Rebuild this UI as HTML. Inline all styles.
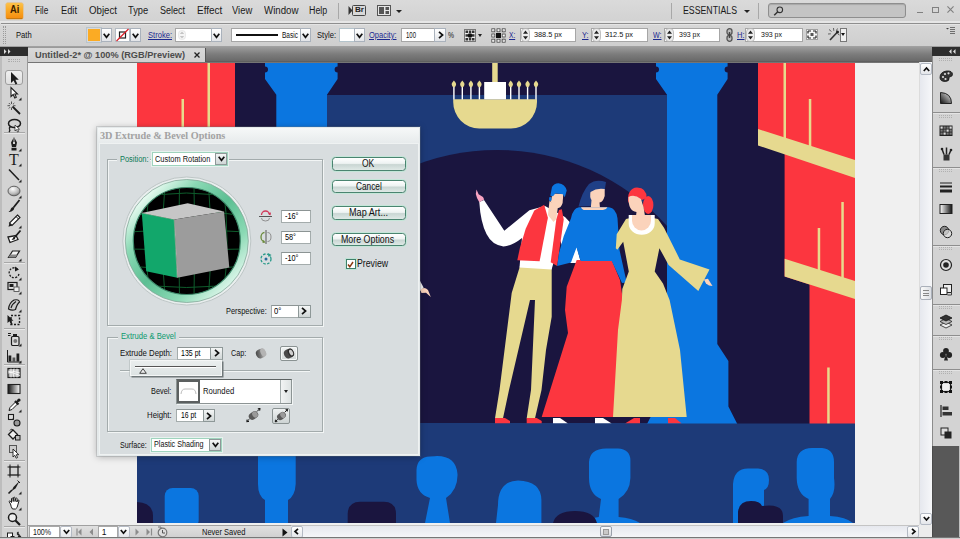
<!DOCTYPE html>
<html><head><meta charset="utf-8"><title>Illustrator</title>
<style>
*{box-sizing:border-box;margin:0;padding:0}
html,body{width:960px;height:539px;overflow:hidden;background:#f0f0f0;font-family:"Liberation Sans",sans-serif;font-size:11px;color:#111}
.a{position:absolute}
svg{display:block;overflow:visible}
</style></head><body>
<div class="a" style="left:28px;top:62px;width:892px;height:463px;background:#f0f0f0;overflow:hidden">
<svg class="a" style="left:109px;top:1px;overflow:hidden" width="718" height="460" viewBox="137 63 718 460">
<rect x="137" y="63" width="718" height="460" fill="#1a153f"/>
<!-- back wall with arch -->
<rect x="327" y="95" width="340" height="329" fill="#1d3a78"/>
<path d="M327 423 L327 226 A228 228 0 0 1 667 226 L667 423 Z" fill="#1a153f"/>
<!-- left curtain -->
<rect x="137" y="63" width="98" height="361" fill="#fc363f"/>
<rect x="181.500" y="99" width="2.500" height="325" fill="#e8d98c"/>
<rect x="207.500" y="63" width="2.500" height="361" fill="#e8d98c"/>
<!-- left column -->
<path d="M265 63 L337.600 63 L337.600 66.500 A3 3 0 0 0 337.600 72.500 L337.600 79 L327 94.700 L327 424 L276.300 424 L276.300 94.700 L265 79 L265 72.500 A3 3 0 0 0 265 66.500 Z" fill="#0b76e0"/>
<!-- right column -->
<path d="M656 63 L727.600 63 L727.600 66.500 A3 3 0 0 0 727.600 72.500 L727.600 79 L717.300 94.700 L717.300 344 L728.400 361 L728.400 406.500 L737.300 424 L647 424 L656 406.500 L656 361 L667 344 L667 94.700 L656 79 L656 72.500 A3 3 0 0 0 656 66.500 Z" fill="#0b76e0"/>
<!-- chandelier -->
<rect x="492.200" y="63" width="5.500" height="20" fill="#e6d98f"/>
<path d="M453.200 99.200 L537 99.200 L537 102 A26 26.400 0 0 1 511 128.400 L479.200 128.400 A26 26.400 0 0 1 453.200 102 Z" fill="#e6d98f"/>
<rect x="484.200" y="82" width="21.800" height="17.300" fill="#fff"/>
<g fill="#fff"><rect x="453.2" y="86" width="1.400" height="13.500"/><rect x="461.6" y="86" width="1.400" height="13.500"/><rect x="470.2" y="86" width="1.400" height="13.500"/><rect x="478.7" y="86" width="1.400" height="13.500"/><rect x="510.0" y="86" width="1.400" height="13.500"/><rect x="518.3" y="86" width="1.400" height="13.500"/><rect x="526.9" y="86" width="1.400" height="13.500"/><rect x="535.3" y="86" width="1.400" height="13.500"/></g>
<g fill="#e6d98f"><path d="M453.9 80.500 Q458.3 85 453.9 87.500 Q449.5 85 453.9 80.500 Z"/><path d="M462.3 80.500 Q466.7 85 462.3 87.500 Q457.9 85 462.3 80.500 Z"/><path d="M470.9 80.500 Q475.3 85 470.9 87.500 Q466.5 85 470.9 80.500 Z"/><path d="M479.4 80.500 Q483.8 85 479.4 87.500 Q475.0 85 479.4 80.500 Z"/><path d="M510.7 80.500 Q515.1 85 510.7 87.500 Q506.3 85 510.7 80.500 Z"/><path d="M519.0 80.500 Q523.4 85 519.0 87.500 Q514.6 85 519.0 80.500 Z"/><path d="M527.6 80.500 Q532.0 85 527.6 87.500 Q523.2 85 527.6 80.500 Z"/><path d="M536.0 80.500 Q540.4 85 536.0 87.500 Q531.6 85 536.0 80.500 Z"/></g>
<!-- right curtain -->
<path d="M758 63 L855 63 L855 424 L809.500 424 L809.500 284.500 L784.600 276.500 L784.600 153 L758 145 Z" fill="#fc363f"/>
<rect x="783.500" y="63" width="2.500" height="76" fill="#e8d98c"/>
<rect x="808.800" y="99" width="2.500" height="48" fill="#e8d98c"/>
<rect x="817.700" y="228" width="2.500" height="44" fill="#e8d98c"/>
<rect x="841.300" y="202" width="2.500" height="76" fill="#e8d98c"/>
<rect x="827.200" y="367.500" width="2.500" height="57" fill="#e8d98c"/>
<path d="M758 129 L855 160 L855 178 L758 145.500 Z" fill="#e6d98f"/>
<path d="M784.600 258.800 L855 281 L855 299 L784.600 276.500 Z" fill="#e6d98f"/>
<!-- man -->
<g>
<path d="M520 266 L551.700 268 L551.700 316.700 L546 350 L541.500 390 L535 418.300 L526.700 418.300 L531 390 L535 300 L530 300 L509 390 L503 418.300 L495 418.300 L499.500 390 L511.700 293 Z" fill="#e6d98f"/>
<path d="M495 418 L505 418 L510 421 L510 423.500 L495 423.500 Z" fill="#fc363f"/>
<path d="M526.700 418 L536.700 418 L541.700 421 L541.700 423.500 L526.700 423.500 Z" fill="#fc363f"/>
<!-- arm -->
<path d="M479.300 201.900 L484 200 L504.300 230.700 L529.400 210.300 L545 206 L565 217 L571.500 224 L573 262 L568 262 L560 240 L551.600 269.500 L519.500 267.500 L522 238 Q512 246 503.400 246.400 Q492 245 486.500 234 Q480.500 222 479.300 201.900 Z" fill="#fff"/>
<path d="M475.800 194 L476.500 189.600 L478.600 194.300 L483 197 L484.200 199.600 L479.300 202.200 Q476.500 198 475.800 194 Z" fill="#f7a3c2"/>
<path d="M549.500 201 L558 206 L556.300 219 L553.500 222 L547.900 215 Z" fill="#fbd3bb"/>
<path d="M544.200 204.700 L547.900 217.700 L539.600 261.300 L517.300 260.300 L520 247.400 L525.700 228.800 L534.300 210.500 Z" fill="#fc363f"/>
<path d="M561.800 209.300 L563.700 219.500 L557.200 265.900 L550.700 262.200 L556.300 219.500 L559 210 Z" fill="#fc363f"/>
<path d="M552.500 193.500 L563.300 194 L562.600 203 Q561 208.200 557.500 208.200 Q553 207 550.800 201.500 Z" fill="#fbd3bb"/>
<path d="M550.300 195.800 L552 187 Q554 183.200 558.500 183.200 Q565.200 184 566.700 190.500 L564.800 197.200 L562.800 194.200 L555.500 193.200 L553 196.300 Z" fill="#0b76e0"/>
<ellipse cx="550.300" cy="199" rx="1.300" ry="2.300" fill="#0b76e0"/>
<path d="M576.500 246 L570 263 L581 263 Z" fill="#fff"/>
</g>
<!-- blue woman -->
<g>
<path d="M578.500 206.500 Q582 192 589 184 Q596 178.500 606 182 L604.700 190.400 L592 192 L592 206 Z" fill="#1f3f86"/>
<path d="M590.500 192 Q597 187.500 604.700 189 L604.700 196 Q603 202 599.500 202.500 L600 208 L590.800 208 L591.500 200 Q589.500 197 590.500 192 Z" fill="#fbd3bb"/>
<path d="M576.700 260 L611.700 260 L620 280 L640 417 L541.700 417 L568 333 L565 310 L566.700 286.700 Z" fill="#fc363f"/>
<path d="M579 207.200 L609 207.200 Q616 208 617.500 218.200 L619.500 250 L626.700 282.500 L622 283 L611.700 261 L580.600 261 L576.500 247.500 L571 262.500 L557.200 266 L559 253 L563.700 236.200 L571 218.200 Q573 208 579 207.200 Z" fill="#0b76e0"/>
<path d="M581 207.200 L607.500 207.200 Q606 210 603 210 L585 210 Q582 210 581 207.200 Z" fill="#fbd3bb"/>
</g>
<!-- yellow woman -->
<g>
<path d="M626 219 Q641 214 658 219 L664 227.800 L679.800 259.400 L709.500 269.600 L698.300 290.900 L668.600 264.900 L659.400 248.200 L654.700 271.400 L663 283.500 L669.600 300 L680 350 L686.700 417 L613 417 L618 330 L621.900 300 L622.300 289 L628.800 271.400 L623.200 241.700 L617.300 249.800 L615.800 248.200 L616.700 234.300 Z" fill="#e6d98f"/>
<path d="M703.900 279.500 L708 278.800 L712.500 286 L709 285.500 L706 283.500 Z" fill="#fbd3bb"/>
<path d="M628.700 215 L654.700 215 L654.700 223.500 A13 11.200 0 0 1 628.700 223.500 Z" fill="#fff"/>
<path d="M632 215 L651 215 L651 220.500 A9.500 10 0 0 1 632 220.500 Z" fill="#fbd3bb"/>
<ellipse cx="648.200" cy="205" rx="5.200" ry="9" fill="#fc363f"/>
<path d="M628 203 Q627 188 637 187.500 Q647 188 646.500 198 L642 200 Q636 195 631 197 Z" fill="#fc363f"/>
<path d="M628.500 197 Q634 193.500 641 199 L643.500 207 L645 216 L636 216 L636.500 212 Q628 211 628.500 197 Z" fill="#fbd3bb"/>
</g>
<!-- shoes -->
<path d="M553 418 L560 418 L568 423.500 L553 423.500 Z" fill="#fff"/>
<path d="M595 418 L603 418 L611.700 423.500 L595 423.500 Z" fill="#fff"/>
<path d="M625 423.500 L634 418 L640 418 L640 423.500 Z" fill="#fc363f"/>
<path d="M668 418 L675 418 L681.700 423.500 L668 423.500 Z" fill="#fc363f"/>
<!--FIG-->
<path d="M418 280 L420.300 281.500 L423.600 287.500 L421 290.500 L418 290.500 Z" fill="#f2f2f4"/>
<path d="M420.300 290 Q424 286 428 290 L430.800 297 L426 292.800 L421.500 293 Z" fill="#fbd3bb"/>
<!-- stage floor -->
<rect x="137" y="423.500" width="718" height="100" fill="#1d3a78"/>
<g fill="#0b76e0">
<rect x="164.700" y="488" width="34" height="40" rx="8"/>
<path d="M258 440 L295.700 440 L295.700 484 Q295 496 288 500 L288 523 L265 523 L265 500 Q258 496 258 484 Z"/>
<path d="M425 523 L430 498 Q417 494 416.500 480 L416.500 470 Q417 457 430 456.500 Q436 456 437 456 Q456 456 457.500 474 Q458 490 446 498 L450 523 Z"/>
<path d="M496 523 L498 505 Q498 481 518 480.500 Q541 481 541.400 500 L541.400 523 Z"/>
<path d="M585 523 Q590 518 598.800 517 L601 499 Q589 494 589 478 L589 462 Q590 448.500 606 448.400 L618 448.400 Q630 449 630.400 460 L630.400 478 Q630 492 618.600 499 L618.600 517 Q632 518 640 523 Z"/>
<path d="M733 523 L733 484 Q734 469 748 468.600 L758 468.600 Q769 469 769 480 Q769 488 764 490 L764 523 Z"/>
<path d="M783 523 Q792 517 808.600 516 L808.600 499 Q797 494 796.700 478 L796.700 462 Q797 448.500 812 448 L822 448 Q834 449 834 462 L834 478 Q836 492 830 499 L830 516 Q846 517 853 523 Z"/>
</g>
<g fill="#1a153f">
<path d="M137 502 Q153 503 153 516 L153 523 L137 523 Z"/>
<path d="M347.700 523 L347.700 514 Q348 502 360 501.700 L384 501.700 Q396 502 396 514 L396 523 Z"/>
<path d="M553 523 Q556 511 575 511 Q594 511 597 523 Z"/>
<path d="M738 523 L738 512 Q739 501 751 501 Q760 501 762 506 Q783 503 783 516 L783 523 Z"/>
</g>


</svg>
</div>
<div class="a" style="left:0px;top:0px;width:960px;height:22px;background:linear-gradient(#dadada,#d2d2d2);"></div>
<div class="a" style="left:0px;top:22px;width:960px;height:25px;background:linear-gradient(#d8d8d8,#cecece);"></div>
<div class="a" style="left:0px;top:21px;width:960px;height:1.5px;background:#e6e6e6;"></div>
<div class="a" style="left:1px;top:22.5px;width:959px;height:1px;background:#8e8e8e;"></div>
<div class="a" style="left:1px;top:23.5px;width:959px;height:1px;background:#e4e4e4;"></div>
<div class="a" style="left:6px;top:2.5px;width:17px;height:16px;background:linear-gradient(#fcc24a,#f9a825 50%,#f68e10);border-bottom:1px solid #c87a10;border-radius:1.500px;box-shadow:0 0 0 0.500px #e8b46a"></div>
<span class="a" style="left:9.7px;top:3.7px;font-size:11px;line-height:11px;color:#3a1c00;white-space:nowrap;transform-origin:0 0;transform:scaleX(0.845);font-weight:bold;">Ai</span>
<span class="a" style="left:35.0px;top:5.8px;font-size:10px;line-height:10px;color:#1a1a1a;white-space:nowrap;transform-origin:0 0;transform:scaleX(0.825);">File</span>
<span class="a" style="left:61.0px;top:5.8px;font-size:10px;line-height:10px;color:#1a1a1a;white-space:nowrap;transform-origin:0 0;transform:scaleX(0.929);">Edit</span>
<span class="a" style="left:89.0px;top:5.8px;font-size:10px;line-height:10px;color:#1a1a1a;white-space:nowrap;transform-origin:0 0;transform:scaleX(0.969);">Object</span>
<span class="a" style="left:128.3px;top:5.8px;font-size:10px;line-height:10px;color:#1a1a1a;white-space:nowrap;transform-origin:0 0;transform:scaleX(0.932);">Type</span>
<span class="a" style="left:160.0px;top:5.8px;font-size:10px;line-height:10px;color:#1a1a1a;white-space:nowrap;transform-origin:0 0;transform:scaleX(0.900);">Select</span>
<span class="a" style="left:196.7px;top:5.8px;font-size:10px;line-height:10px;color:#1a1a1a;white-space:nowrap;transform-origin:0 0;transform:scaleX(0.997);">Effect</span>
<span class="a" style="left:232.3px;top:5.8px;font-size:10px;line-height:10px;color:#1a1a1a;white-space:nowrap;transform-origin:0 0;transform:scaleX(0.940);">View</span>
<span class="a" style="left:263.5px;top:5.8px;font-size:10px;line-height:10px;color:#1a1a1a;white-space:nowrap;transform-origin:0 0;transform:scaleX(0.970);">Window</span>
<span class="a" style="left:308.8px;top:5.8px;font-size:10px;line-height:10px;color:#1a1a1a;white-space:nowrap;transform-origin:0 0;transform:scaleX(0.885);">Help</span>
<div class="a" style="left:338px;top:3px;width:1px;height:16px;background:#a8a8a8;"></div>
<svg class="a" style="left:348px;top:5px" width="18" height="11" viewBox="0 0 18 11"><path d="M0.500 1 L4.500 5.500 L0.500 10 Z" fill="#333"/><rect x="4.500" y="0.500" width="13" height="10" rx="1" fill="#d8d8d8" stroke="#444"/></svg>
<span class="a" style="left:355.0px;top:6.4px;font-size:7.5px;line-height:7.5px;color:#222;white-space:nowrap;transform-origin:0 0;transform:scaleX(1.080);font-weight:bold;">Br</span>
<svg class="a" style="left:377px;top:5px" width="14" height="11" viewBox="0 0 14 11"><rect x="0.500" y="0.500" width="13" height="10" fill="#e6e6e6" stroke="#555"/><rect x="2" y="2" width="5" height="7" fill="#555"/><rect x="8.500" y="2" width="3.500" height="3" fill="#555"/><rect x="8.500" y="6" width="3.500" height="3" fill="#555"/></svg>
<div class="a" style="left:395.5px;top:9.5px;width:0;height:0;border-top:3.5px solid #222;border-left:3.0px solid transparent;border-right:3.0px solid transparent"></div>
<div class="a" style="left:671px;top:3px;width:1px;height:16px;background:#a8a8a8;"></div>
<span class="a" style="left:683.0px;top:5.9px;font-size:10px;line-height:10px;color:#1a1a1a;white-space:nowrap;transform-origin:0 0;transform:scaleX(0.875);">ESSENTIALS</span>
<div class="a" style="left:744px;top:9.5px;width:0;height:0;border-top:3.5px solid #222;border-left:3.0px solid transparent;border-right:3.0px solid transparent"></div>
<div class="a" style="left:758px;top:3px;width:1px;height:16px;background:#a8a8a8;"></div>
<div class="a" style="left:768px;top:3px;width:138px;height:15px;background:#c4c4c4;border:1px solid #8e8e8e;border-radius:3px;box-shadow:inset 0 1px 1px #a8a8a8"><svg class="a" style="left:4px;top:2px" width="12" height="10" viewBox="0 0 12 10"><circle cx="6.800" cy="3.800" r="2.800" fill="none" stroke="#333" stroke-width="1.100"/><path d="M4.800 5.800 L1.200 9.300" stroke="#333" stroke-width="1.500"/></svg></div>
<div class="a" style="left:916.5px;top:11.5px;width:6px;height:1.5px;background:#808080;"></div>
<div class="a" style="left:931.5px;top:6.5px;width:7.5px;height:6px;background:transparent;border:1px solid #808080;border-top-width:1.500px"></div>
<svg class="a" style="left:946.500px;top:6px" width="7" height="7" viewBox="0 0 8 8"><path d="M0.500 0.500 L7.500 7.500 M7.500 0.500 L0.500 7.500" stroke="#808080" stroke-width="1.300"/></svg>
<div class="a" style="left:3px;top:26px;width:3px;height:18px;background:transparent;border-left:1px dotted #9a9a9a;border-right:1px dotted #9a9a9a"></div>
<span class="a" style="left:16.0px;top:30.7px;font-size:8.5px;line-height:8.5px;color:#111;white-space:nowrap;transform-origin:0 0;transform:scaleX(0.898);">Path</span>
<div class="a" style="left:87px;top:28px;width:14px;height:14px;background:#fbab24;border:1px solid #d8d8d8;box-shadow:0 0 0 1px #b8c4cc"></div>
<div class="a" style="left:101px;top:28px;width:11px;height:14px;background:linear-gradient(#ffffff,#e2e4e8);border:1px solid #aab2bc;"><svg class="a" style="left:1px;top:3.500px" width="7" height="6" viewBox="0 0 7 6"><path d="M0.700 0.800 L3.500 4.300 L6.300 0.800" fill="none" stroke="#111" stroke-width="1.700"/></svg></div>
<div class="a" style="left:115px;top:28px;width:15px;height:14px;background:#fff;border:1px solid #b4bcc4"><svg class="a" style="left:0;top:0" width="13" height="12" viewBox="0 0 13 12"><rect x="3.500" y="3" width="6" height="6" fill="none" stroke="#222" stroke-width="1.200"/><path d="M12.500 0 L0.500 12" stroke="#d8202a" stroke-width="1.300"/></svg></div>
<div class="a" style="left:130px;top:28px;width:11px;height:14px;background:linear-gradient(#ffffff,#e2e4e8);border:1px solid #aab2bc;"><svg class="a" style="left:1px;top:3.500px" width="7" height="6" viewBox="0 0 7 6"><path d="M0.700 0.800 L3.500 4.300 L6.300 0.800" fill="none" stroke="#111" stroke-width="1.700"/></svg></div>
<span class="a" style="left:147.7px;top:30.7px;font-size:8.5px;line-height:8.5px;color:#1c2a90;white-space:nowrap;transform-origin:0 0;transform:scaleX(0.891);text-decoration:underline;">Stroke:</span>
<div class="a" style="left:175px;top:28px;width:37px;height:14px;background:#fff;border:1px solid #a6a6a6;"><svg class="a" style="left:2px;top:1px" width="8" height="10" viewBox="0 0 8 10"><rect x="0.500" y="0.500" width="7" height="9" rx="3" fill="#f4f4f4" stroke="#ddd" stroke-width="0.600"/><path d="M1.800 4 L4 1.500 L6.200 4 Z M1.800 6 L4 8.500 L6.200 6 Z" fill="#c4c4c4"/></svg></div>
<div class="a" style="left:211px;top:28px;width:11px;height:14px;background:linear-gradient(#ffffff,#e2e4e8);border:1px solid #aab2bc;"><svg class="a" style="left:1px;top:3.500px" width="7" height="6" viewBox="0 0 7 6"><path d="M0.700 0.800 L3.500 4.300 L6.300 0.800" fill="none" stroke="#111" stroke-width="1.700"/></svg></div>
<div class="a" style="left:231px;top:28px;width:70px;height:14px;background:#fff;border:1px solid #a6a6a6;"><div class="a" style="left:4px;top:5px;width:42px;height:2px;background:#111"></div></div>
<span class="a" style="left:282.0px;top:30.7px;font-size:8.5px;line-height:8.5px;color:#111;white-space:nowrap;transform-origin:0 0;transform:scaleX(0.770);">Basic</span>
<div class="a" style="left:300px;top:28px;width:11px;height:14px;background:linear-gradient(#ffffff,#e2e4e8);border:1px solid #aab2bc;"><svg class="a" style="left:1px;top:3.500px" width="7" height="6" viewBox="0 0 7 6"><path d="M0.700 0.800 L3.500 4.300 L6.300 0.800" fill="none" stroke="#111" stroke-width="1.700"/></svg></div>
<span class="a" style="left:316.8px;top:30.7px;font-size:8.5px;line-height:8.5px;color:#111;white-space:nowrap;transform-origin:0 0;transform:scaleX(0.894);">Style:</span>
<div class="a" style="left:339px;top:28px;width:16px;height:14px;background:#fff;border:1px solid #b4c4cc;"></div>
<div class="a" style="left:354px;top:28px;width:11px;height:14px;background:linear-gradient(#ffffff,#e2e4e8);border:1px solid #aab2bc;"><svg class="a" style="left:1px;top:3.500px" width="7" height="6" viewBox="0 0 7 6"><path d="M0.700 0.800 L3.500 4.300 L6.300 0.800" fill="none" stroke="#111" stroke-width="1.700"/></svg></div>
<span class="a" style="left:368.8px;top:30.7px;font-size:8.5px;line-height:8.5px;color:#1c2a90;white-space:nowrap;transform-origin:0 0;transform:scaleX(0.882);text-decoration:underline;">Opacity:</span>
<div class="a" style="left:401px;top:28px;width:34px;height:14px;background:#fff;border:1px solid #a6a6a6;"></div>
<span class="a" style="left:405.5px;top:30.7px;font-size:8.5px;line-height:8.5px;color:#111;white-space:nowrap;transform-origin:0 0;transform:scaleX(0.705);">100</span>
<div class="a" style="left:434px;top:28px;width:12px;height:14px;background:linear-gradient(#ffffff,#e2e4e8);border:1px solid #aab2bc"><svg class="a" style="left:2.500px;top:2px" width="6" height="8" viewBox="0 0 6 8"><path d="M1 0.800 L4.600 4 L1 7.200" fill="none" stroke="#111" stroke-width="1.700"/></svg></div>
<span class="a" style="left:447.5px;top:30.7px;font-size:8.5px;line-height:8.5px;color:#111;white-space:nowrap;transform-origin:0 0;transform:scaleX(0.794);">%</span>
<svg class="a" style="left:464px;top:29px" width="12" height="13" viewBox="0 0 12 13"><rect x="0.500" y="0.500" width="11" height="12" fill="#eee" stroke="#777"/><g fill="#333"><rect x="1.500" y="1.500" width="2.500" height="2.500"/><rect x="4.800" y="1.500" width="2.500" height="2.500"/><rect x="8" y="1.500" width="2.500" height="2.500"/><rect x="1.500" y="5.200" width="2.500" height="2.500"/><rect x="8" y="5.200" width="2.500" height="2.500"/><rect x="1.500" y="9" width="2.500" height="2.500"/><rect x="4.800" y="9" width="2.500" height="2.500"/><rect x="8" y="9" width="2.500" height="2.500"/></g><circle cx="6" cy="6.500" r="2.300" fill="#111"/></svg>
<div class="a" style="left:477.5px;top:34px;width:0;height:0;border-top:3px solid #222;border-left:2.0px solid transparent;border-right:2.0px solid transparent"></div>
<svg class="a" style="left:491px;top:28px" width="15" height="15" viewBox="0 0 15 15"><g fill="#fff" stroke="#444" stroke-width="0.800"><rect x="0.800" y="0.800" width="3" height="3"/><rect x="6" y="0.800" width="3" height="3"/><rect x="11.200" y="0.800" width="3" height="3"/><rect x="0.800" y="6" width="3" height="3"/><rect x="11.200" y="6" width="3" height="3"/><rect x="0.800" y="11.200" width="3" height="3"/><rect x="6" y="11.200" width="3" height="3"/><rect x="11.200" y="11.200" width="3" height="3"/></g><rect x="5" y="5" width="5" height="5" fill="#111"/><path d="M2.300 2.300 H12.700 V12.700 H2.300 Z" fill="none" stroke="#888" stroke-width="0.500" stroke-dasharray="1 1"/></svg>
<span class="a" style="left:508.8px;top:30.7px;font-size:8.5px;line-height:8.5px;color:#1c2a90;white-space:nowrap;transform-origin:0 0;transform:scaleX(0.772);text-decoration:underline;">X:</span>
<div class="a" style="left:520px;top:28px;width:56px;height:14px;background:#fff;border:1px solid #a6a6a6;"></div>
<svg class="a" style="left:520.5px;top:28px" width="9" height="14" viewBox="0 0 9 14"><rect x="0.500" y="0.500" width="8" height="13" rx="3.500" fill="#ececec" stroke="#aaa" stroke-width="0.700"/><path d="M2 5.800 L4.500 2.600 L7 5.800 Z M2 8.200 L4.500 11.400 L7 8.200 Z" fill="#222"/></svg>
<span class="a" style="left:534.0px;top:31.0px;font-size:8px;line-height:8px;color:#111;white-space:nowrap;transform-origin:0 0;transform:scaleX(0.912);">388.5 px</span>
<span class="a" style="left:581.5px;top:30.7px;font-size:8.5px;line-height:8.5px;color:#1c2a90;white-space:nowrap;transform-origin:0 0;transform:scaleX(0.860);text-decoration:underline;">Y:</span>
<div class="a" style="left:591px;top:28px;width:57px;height:14px;background:#fff;border:1px solid #a6a6a6;"></div>
<svg class="a" style="left:591.5px;top:28px" width="9" height="14" viewBox="0 0 9 14"><rect x="0.500" y="0.500" width="8" height="13" rx="3.500" fill="#ececec" stroke="#aaa" stroke-width="0.700"/><path d="M2 5.800 L4.500 2.600 L7 5.800 Z M2 8.200 L4.500 11.400 L7 8.200 Z" fill="#222"/></svg>
<span class="a" style="left:605.0px;top:31.0px;font-size:8px;line-height:8px;color:#111;white-space:nowrap;transform-origin:0 0;transform:scaleX(0.912);">312.5 px</span>
<span class="a" style="left:652.5px;top:30.7px;font-size:8.5px;line-height:8.5px;color:#1c2a90;white-space:nowrap;transform-origin:0 0;transform:scaleX(0.831);text-decoration:underline;">W:</span>
<div class="a" style="left:664px;top:28px;width:56px;height:14px;background:#fff;border:1px solid #a6a6a6;"></div>
<svg class="a" style="left:664.5px;top:28px" width="9" height="14" viewBox="0 0 9 14"><rect x="0.500" y="0.500" width="8" height="13" rx="3.500" fill="#ececec" stroke="#aaa" stroke-width="0.700"/><path d="M2 5.800 L4.500 2.600 L7 5.800 Z M2 8.200 L4.500 11.400 L7 8.200 Z" fill="#222"/></svg>
<span class="a" style="left:679.0px;top:31.0px;font-size:8px;line-height:8px;color:#111;white-space:nowrap;transform-origin:0 0;transform:scaleX(0.874);">393 px</span>
<svg class="a" style="left:726px;top:28px" width="7" height="14" viewBox="0 0 7 14"><rect x="1" y="0.700" width="5" height="6" rx="2.500" fill="#bbb" stroke="#555" stroke-width="1.300"/><rect x="1" y="7.300" width="5" height="6" rx="2.500" fill="#bbb" stroke="#555" stroke-width="1.300"/><rect x="2.800" y="4" width="1.400" height="6" fill="#444"/></svg>
<span class="a" style="left:736.5px;top:30.7px;font-size:8.5px;line-height:8.5px;color:#1c2a90;white-space:nowrap;transform-origin:0 0;transform:scaleX(0.882);text-decoration:underline;">H:</span>
<div class="a" style="left:745px;top:28px;width:58px;height:14px;background:#fff;border:1px solid #a6a6a6;"></div>
<svg class="a" style="left:745.5px;top:28px" width="9" height="14" viewBox="0 0 9 14"><rect x="0.500" y="0.500" width="8" height="13" rx="3.500" fill="#ececec" stroke="#aaa" stroke-width="0.700"/><path d="M2 5.800 L4.500 2.600 L7 5.800 Z M2 8.200 L4.500 11.400 L7 8.200 Z" fill="#222"/></svg>
<span class="a" style="left:761.0px;top:31.0px;font-size:8px;line-height:8px;color:#111;white-space:nowrap;transform-origin:0 0;transform:scaleX(0.874);">393 px</span>
<svg class="a" style="left:806px;top:29px" width="12" height="11" viewBox="0 0 12 11"><rect x="0.500" y="0.500" width="11" height="10" fill="#f6f6f6" stroke="#a0a0a0"/><path d="M2 2 L5 2 M2 2 L2 4.500 M10 2 L7 2 M10 2 L10 4.500 M2 9 L5 9 M2 9 L2 6.500 M10 9 L7 9 M10 9 L10 6.500" stroke="#222" stroke-width="1.200"/><rect x="4.500" y="4" width="3" height="3" fill="#555"/></svg>
<svg class="a" style="left:827px;top:27px" width="14" height="15" viewBox="0 0 14 15"><path d="M3 13 L10.500 5" stroke="#333" stroke-width="1.700"/><path d="M2 2.500 L4.500 4.500 M6.500 1 L6.800 3.800 M1 7 L3.800 6.800 M10.500 1.500 L9.300 3.800 M12.500 8 L10.800 7" stroke="#555" stroke-width="0.900"/><circle cx="10.500" cy="5" r="1.500" fill="#222"/></svg>
<div class="a" style="left:840px;top:28px;width:7px;height:14px;background:#f0f0f0;border:1px solid #777"><div class="a" style="left:0.3px;top:4px;width:0;height:0;border-top:3px solid #111;border-left:2.2px solid transparent;border-right:2.2px solid transparent"></div></div>
<svg class="a" style="left:946px;top:27px" width="9" height="7" viewBox="0 0 9 7"><path d="M0 1 L1.500 2.500 L3 1 Z" fill="#444"/><path d="M4 0.500 H9 M4 2.500 H9 M4 4.500 H9 M4 6.500 H9" stroke="#555" stroke-width="0.800"/></svg>
<div class="a" style="left:0px;top:47px;width:960px;height:16px;background:linear-gradient(#9c9c9c,#7c7c7c 45%,#6a6a6a 85%,#5a5a5a 93%,#8a8a8a);"></div>
<div class="a" style="left:0px;top:46px;width:960px;height:1px;background:#a0a0a0;"></div>
<div class="a" style="left:28px;top:47.5px;width:178px;height:14.5px;background:linear-gradient(#d8d8d8,#cfcfcf);border-right:1px solid #555"></div>
<span class="a" style="left:35.0px;top:49.9px;font-size:9.5px;line-height:9.5px;color:#4c4c4c;white-space:nowrap;transform-origin:0 0;transform:scaleX(0.968);font-weight:bold;">Untitled-2* @ 100% (RGB/Preview)</span>
<svg class="a" style="left:194px;top:52px" width="6" height="6" viewBox="0 0 6 6"><path d="M0.500 0.500 L5.500 5.500 M5.500 0.500 L0.500 5.500" stroke="#222" stroke-width="1.300"/></svg>
<div class="a" style="left:0px;top:47px;width:28px;height:9px;background:#2e2e2e;"><svg class="a" style="left:3.500px;top:2px" width="8" height="5" viewBox="0 0 8 5"><path d="M0 0 L2.500 2.500 L0 5 Z M4 0 L6.500 2.500 L4 5 Z" fill="#ddd"/></svg></div>
<div class="a" style="left:932px;top:47px;width:28px;height:8.5px;background:#2e2e2e;"><svg class="a" style="left:17px;top:2px" width="8" height="5" viewBox="0 0 8 5"><path d="M2.500 0 L0 2.500 L2.500 5 Z M6.500 0 L4 2.500 L6.500 5 Z" fill="#ddd"/></svg></div>
<div class="a" style="left:0px;top:56px;width:28px;height:483px;background:#d3d3d3;border-right:1px solid #9a9a9a;border-left:2px solid #bdbdbd"></div>
<div class="a" style="left:8px;top:59px;width:12px;height:3px;background:transparent;border-top:1px dotted #aaa;border-bottom:1px dotted #aaa"></div>
<div class="a" style="left:4px;top:132px;width:21px;height:1px;background:#a8a8a8;box-shadow:0 1px 0 #e8e8e8"></div>
<div class="a" style="left:4px;top:262px;width:21px;height:1px;background:#a8a8a8;box-shadow:0 1px 0 #e8e8e8"></div>
<div class="a" style="left:4px;top:328px;width:21px;height:1px;background:#a8a8a8;box-shadow:0 1px 0 #e8e8e8"></div>
<div class="a" style="left:4px;top:363.5px;width:21px;height:1px;background:#a8a8a8;box-shadow:0 1px 0 #e8e8e8"></div>
<div class="a" style="left:4px;top:460px;width:21px;height:1px;background:#a8a8a8;box-shadow:0 1px 0 #e8e8e8"></div>
<div class="a" style="left:4px;top:526px;width:21px;height:1px;background:#a8a8a8;box-shadow:0 1px 0 #e8e8e8"></div>
<div class="a" style="left:5px;top:70px;width:18px;height:15px;background:linear-gradient(#f0f0f0,#dedede);border:1px solid #9e9e9e;border-radius:3px"></div>
<svg class="a" style="left:5.5px;top:69.5px" width="16" height="16" viewBox="0 0 16 16"><path d="M5 2 L5 13 L7.600 10.500 L9.500 14.500 L11.300 13.700 L9.400 9.800 L12.800 9.800 Z" fill="#1c1c1c"/></svg>
<svg class="a" style="left:5.5px;top:85.0px" width="16" height="16" viewBox="0 0 16 16"><path d="M5 2.500 L5 11.500 L7.200 9.500 L8.800 13 L10.300 12.300 L8.800 9 L11.500 9 Z" fill="#fff" stroke="#1c1c1c" stroke-width="1.100"/><path d="M15.500 12.500 L15.500 15.500 L12.500 15.500 Z" fill="#222"/></svg>
<svg class="a" style="left:5.5px;top:100.0px" width="16" height="16" viewBox="0 0 16 16"><path d="M6.500 6.500 L14 14" stroke="#1c1c1c" stroke-width="1.800"/><path d="M5.500 1.500 V4 M5.500 7.500 V10 M1.500 5.700 H4 M7.200 5.700 H9.500 M2.800 3 L4.200 4.400 M8.300 3 L6.900 4.400 M2.800 8.500 L4.200 7.100" stroke="#444" stroke-width="0.900"/></svg>
<svg class="a" style="left:5.5px;top:116.5px" width="16" height="16" viewBox="0 0 16 16"><ellipse cx="8.500" cy="6.500" rx="6" ry="4" fill="none" stroke="#1c1c1c" stroke-width="1.500"/><path d="M5 9.500 Q3 10 3.500 12 Q4.500 13.500 3 15" fill="none" stroke="#1c1c1c" stroke-width="1.300"/><path d="M9 8 L9 14 L10.500 12.600 L11.500 15 L12.700 14.500 L11.700 12.200 L13.500 12.200 Z" fill="#fff" stroke="#1c1c1c" stroke-width="0.700"/></svg>
<svg class="a" style="left:5.5px;top:135.5px" width="16" height="16" viewBox="0 0 16 16"><path d="M8 1 L11 6.500 L10 11 L6 11 L5 6.500 Z" fill="#1c1c1c"/><circle cx="8" cy="7" r="1.100" fill="#fff"/><path d="M8 1.500 V6" stroke="#fff" stroke-width="0.700"/><rect x="5.500" y="11.800" width="5" height="2.700" fill="#1c1c1c"/><path d="M15.500 12.500 L15.500 15.500 L12.500 15.500 Z" fill="#222"/></svg>
<svg class="a" style="left:5.5px;top:151.0px" width="16" height="16" viewBox="0 0 16 16"><text x="8" y="13.500" text-anchor="middle" font-family="Liberation Serif,serif" font-size="16" fill="#1c1c1c">T</text><path d="M15.500 12.500 L15.500 15.500 L12.500 15.500 Z" fill="#222"/></svg>
<svg class="a" style="left:5.5px;top:167.0px" width="16" height="16" viewBox="0 0 16 16"><path d="M3 2.500 L13 13" stroke="#1c1c1c" stroke-width="1.500"/><path d="M15.500 12.500 L15.500 15.500 L12.500 15.500 Z" fill="#222"/></svg>
<svg class="a" style="left:5.5px;top:183.0px" width="16" height="16" viewBox="0 0 16 16"><defs><radialGradient id="eg" cx="0.400" cy="0.300" r="0.800"><stop offset="0" stop-color="#fff"/><stop offset="0.600" stop-color="#bbb"/><stop offset="1" stop-color="#666"/></radialGradient></defs><ellipse cx="8" cy="8" rx="6" ry="4.800" fill="url(#eg)" stroke="#555" stroke-width="0.900"/><path d="M15.500 12.500 L15.500 15.500 L12.500 15.500 Z" fill="#222"/></svg>
<svg class="a" style="left:5.5px;top:197.5px" width="16" height="16" viewBox="0 0 16 16"><path d="M13.500 2 L7.500 9.500" stroke="#1c1c1c" stroke-width="1.800"/><path d="M7.500 9 Q9 10.500 7.500 12 Q5 14.500 2.500 14 Q4.500 12.500 5 10.500 Q5.800 8.800 7.500 9 Z" fill="#1c1c1c"/></svg>
<svg class="a" style="left:5.5px;top:212.5px" width="16" height="16" viewBox="0 0 16 16"><path d="M11.500 2 L14 4.500 L6 12.500 L3.500 10 Z" fill="#fff" stroke="#1c1c1c" stroke-width="1.100"/><path d="M3.500 10 L6 12.500 L2.500 13.800 Z" fill="#1c1c1c"/><path d="M10 3.500 L12.500 6" stroke="#1c1c1c" stroke-width="1"/><path d="M15.500 12.500 L15.500 15.500 L12.500 15.500 Z" fill="#222"/></svg>
<svg class="a" style="left:5.5px;top:229.0px" width="16" height="16" viewBox="0 0 16 16"><path d="M2 8 L10 6.500 L12 10.500 L4 13.500 Z" fill="#fff" stroke="#1c1c1c" stroke-width="1.300"/><path d="M14.500 1.500 L9 8" stroke="#1c1c1c" stroke-width="1.800"/><path d="M9 7.500 Q10 9 8.500 10.500 L5.500 11 Q7 9.500 7.300 8.200 Z" fill="#1c1c1c"/></svg>
<svg class="a" style="left:5.5px;top:245.5px" width="16" height="16" viewBox="0 0 16 16"><path d="M6.500 5 L13.500 5 L9.500 11.500 L2.500 11.500 Z" fill="#f4f4f4" stroke="#1c1c1c" stroke-width="1.200"/><path d="M2.500 11.500 L4.300 8.600 L11.300 8.600 L9.500 11.500 Z" fill="#888"/><path d="M15.500 12.500 L15.500 15.500 L12.500 15.500 Z" fill="#222"/></svg>
<svg class="a" style="left:5.5px;top:264.5px" width="16" height="16" viewBox="0 0 16 16"><path d="M11.500 4 A5 5 0 1 0 13 9" fill="none" stroke="#1c1c1c" stroke-width="1.300" stroke-dasharray="2 1.300"/><path d="M9 1.500 L13 4.500 L9 6.500 Z" fill="#1c1c1c"/><path d="M15.500 12.500 L15.500 15.500 L12.500 15.500 Z" fill="#222"/></svg>
<svg class="a" style="left:5.5px;top:279.0px" width="16" height="16" viewBox="0 0 16 16"><rect x="2" y="3.500" width="9" height="7" fill="#ddd" stroke="#1c1c1c" stroke-width="1.200"/><rect x="3.500" y="5" width="4" height="3" fill="#1c1c1c"/><rect x="8" y="8" width="5" height="4.500" fill="#eee" stroke="#555" stroke-width="0.900"/><path d="M15.500 12.500 L15.500 15.500 L12.500 15.500 Z" fill="#222"/></svg>
<svg class="a" style="left:5.5px;top:297.0px" width="16" height="16" viewBox="0 0 16 16"><path d="M2.500 12 Q3 6 8 3 Q13 2 13.500 5 Q11 7 9.500 12.500 Q6 14 2.500 12 Z" fill="#ccc" stroke="#1c1c1c" stroke-width="1.200"/><path d="M5 11 Q6 7 10 4.500" fill="none" stroke="#1c1c1c" stroke-width="1.100"/><path d="M15.500 12.500 L15.500 15.500 L12.500 15.500 Z" fill="#222"/></svg>
<svg class="a" style="left:5.5px;top:312.0px" width="16" height="16" viewBox="0 0 16 16"><rect x="5" y="3.500" width="8.500" height="9" fill="none" stroke="#1c1c1c" stroke-width="1.400" stroke-dasharray="2 1.500"/><path d="M1.500 3 L1.500 11 L3.500 9.300 L5 12.500 L6.500 11.800 L5 8.700 L7.500 8.700 Z" fill="#1c1c1c"/></svg>
<svg class="a" style="left:5.5px;top:331.0px" width="16" height="16" viewBox="0 0 16 16"><rect x="5.500" y="5.500" width="7.500" height="9" rx="1.200" fill="#ddd" stroke="#1c1c1c" stroke-width="1.200"/><rect x="7" y="3" width="4" height="2.500" fill="#1c1c1c"/><circle cx="9.300" cy="10" r="2" fill="#777"/><path d="M2 2.500 H5 M2 4.500 H4.500" stroke="#1c1c1c" stroke-width="1"/><path d="M15.500 12.500 L15.500 15.500 L12.500 15.500 Z" fill="#222"/></svg>
<svg class="a" style="left:5.5px;top:347.5px" width="16" height="16" viewBox="0 0 16 16"><rect x="2.500" y="7.500" width="2.800" height="6" fill="#1c1c1c"/><rect x="6.500" y="9.500" width="2.800" height="4" fill="#555"/><rect x="10.500" y="5.500" width="2.800" height="8" fill="#1c1c1c"/><path d="M1.500 2 V14 H15" fill="none" stroke="#1c1c1c" stroke-width="1"/><path d="M15.500 12.500 L15.500 15.500 L12.500 15.500 Z" fill="#222"/></svg>
<svg class="a" style="left:5.5px;top:365.0px" width="16" height="16" viewBox="0 0 16 16"><rect x="2" y="3.500" width="12" height="9" fill="#bbb" stroke="#1c1c1c" stroke-width="1.200"/><path d="M2 8 Q8 5 14 8 M8 3.500 Q6 8 8 12.500 M2 6 L14 10.500 M5 3.500 L5 12.500 M11 3.500 L11 12.500" stroke="#fff" stroke-width="0.800" fill="none"/></svg>
<svg class="a" style="left:5.5px;top:381.0px" width="16" height="16" viewBox="0 0 16 16"><defs><linearGradient id="gg"><stop offset="0" stop-color="#111"/><stop offset="1" stop-color="#fff"/></linearGradient></defs><rect x="2" y="3.500" width="12" height="9" fill="url(#gg)" stroke="#222" stroke-width="1.100"/></svg>
<svg class="a" style="left:5.5px;top:397.0px" width="16" height="16" viewBox="0 0 16 16"><path d="M3 13.500 L4 10.500 L9.500 5 L11.500 7 L6 12.500 Z" fill="#fff" stroke="#1c1c1c" stroke-width="1"/><path d="M9 4 L12.500 7.500 M10.500 5.500 L13 3" stroke="#1c1c1c" stroke-width="2.200"/><circle cx="13" cy="3" r="1.600" fill="#1c1c1c"/><path d="M15.500 12.500 L15.500 15.500 L12.500 15.500 Z" fill="#222"/></svg>
<svg class="a" style="left:5.5px;top:411.5px" width="16" height="16" viewBox="0 0 16 16"><rect x="2.500" y="2.500" width="5" height="5" fill="#ddd" stroke="#1c1c1c" stroke-width="1.100"/><circle cx="11" cy="11" r="3" fill="#999" stroke="#1c1c1c" stroke-width="1.100"/><path d="M6.500 6.500 L9.500 9.500" stroke="#666" stroke-width="0.900" stroke-dasharray="1 1"/></svg>
<svg class="a" style="left:5.5px;top:427.0px" width="16" height="16" viewBox="0 0 16 16"><path d="M2.500 7.500 L7 3 L11.500 7.500 L7 12 Z" fill="#eee" stroke="#1c1c1c" stroke-width="1.300"/><rect x="9.500" y="8.500" width="4.500" height="4.500" fill="#bbb" stroke="#1c1c1c" stroke-width="1"/><path d="M7 3 Q5 1 4 3.500" fill="none" stroke="#1c1c1c" stroke-width="1"/></svg>
<svg class="a" style="left:5.5px;top:443.0px" width="16" height="16" viewBox="0 0 16 16"><rect x="3.500" y="2.500" width="7" height="7" fill="#ccc" stroke="#555" stroke-width="1"/><path d="M7 6 L7 14 L8.800 12.300 L10.200 15.200 L11.600 14.500 L10.300 11.700 L12.800 11.700 Z" fill="#fff" stroke="#1c1c1c" stroke-width="0.900"/></svg>
<svg class="a" style="left:5.5px;top:463.0px" width="16" height="16" viewBox="0 0 16 16"><rect x="4" y="4" width="8" height="8" fill="none" stroke="#1c1c1c" stroke-width="1.300"/><path d="M4 1.500 V4 M12 1.500 V4 M4 12 V14.500 M12 12 V14.500 M1.500 4 H4 M12 4 H14.500 M1.500 12 H4 M12 12 H14.500" stroke="#1c1c1c" stroke-width="1"/></svg>
<svg class="a" style="left:5.5px;top:478.5px" width="16" height="16" viewBox="0 0 16 16"><path d="M13.500 2 L7.500 8 L5.500 12 L9.500 9.500 Z" fill="#1c1c1c"/><path d="M6 11 L2.500 14.500" stroke="#1c1c1c" stroke-width="1.600"/><path d="M11.500 1.500 L14 4" stroke="#1c1c1c" stroke-width="1"/><path d="M15.500 12.500 L15.500 15.500 L12.500 15.500 Z" fill="#222"/></svg>
<svg class="a" style="left:5.5px;top:495.0px" width="16" height="16" viewBox="0 0 16 16"><path d="M4.500 9 L3 6.500 Q3.500 5.500 4.800 6.500 L5.500 7.500 L5.500 3.500 Q6.300 2.700 7 3.500 L7.200 6.500 L7.500 2.500 Q8.300 1.800 9 2.600 L9 6.500 L9.800 3.300 Q10.600 2.700 11.200 3.500 L10.800 7 L12 5 Q13 4.800 13 5.800 L11.800 10 Q11.500 13 9.500 14 L6.500 14 Q5 12 4.500 9 Z" fill="#fff" stroke="#1c1c1c" stroke-width="1"/><path d="M15.500 12.500 L15.500 15.500 L12.500 15.500 Z" fill="#222"/></svg>
<svg class="a" style="left:5.5px;top:510.5px" width="16" height="16" viewBox="0 0 16 16"><circle cx="6.500" cy="6.500" r="4" fill="#eee" stroke="#1c1c1c" stroke-width="1.500"/><path d="M9.500 9.500 L14 14" stroke="#1c1c1c" stroke-width="2.200"/></svg>
<svg class="a" style="left:5.5px;top:528.0px" width="16" height="12" viewBox="0 0 16 12"><rect x="1.500" y="5" width="5" height="5" fill="#fff" stroke="#1c1c1c" stroke-width="1"/><rect x="4.500" y="8" width="4" height="4" fill="#1c1c1c"/><path d="M11 5.500 Q13.500 5.500 13.500 9 M11 5.500 L12.500 4 M11 5.500 L12.500 7 M13.500 9 L12 8 M13.500 9 L15 8" stroke="#1c1c1c" stroke-width="1.100" fill="none"/></svg>
<div class="a" style="left:919px;top:62px;width:13px;height:463px;background:linear-gradient(90deg,#e6e8ee,#f6f7f9);border-left:1px solid #dcdcdc"></div>
<div class="a" style="left:920px;top:63px;width:12px;height:12px;background:linear-gradient(#fff,#e4e6ea);border:1px solid #b4bac4;border-radius:2px"><svg class="a" style="left:1.5px;top:1.5px" width="7" height="7" viewBox="0 0 7 7"><path d="M0.800 5 L3.500 2 L6.200 5" fill="none" stroke="#111" stroke-width="1.700"/></svg></div>
<div class="a" style="left:920px;top:512.5px;width:12px;height:12px;background:linear-gradient(#fff,#e4e6ea);border:1px solid #b4bac4;border-radius:2px"><svg class="a" style="left:1.5px;top:1.5px" width="7" height="7" viewBox="0 0 7 7"><path d="M0.800 2 L3.500 5 L6.200 2" fill="none" stroke="#111" stroke-width="1.700"/></svg></div>
<div class="a" style="left:920px;top:286px;width:12px;height:14px;background:linear-gradient(90deg,#fafafa,#dcdfe4);border:1px solid #aab0ba;border-radius:2px"><div class="a" style="left:2px;top:3px;width:6px;height:6px;border-top:1px solid #888;border-bottom:1px solid #888"><div class="a" style="left:0;top:2px;width:6px;height:1px;background:#888"></div></div></div>
<div class="a" style="left:28px;top:524.5px;width:904px;height:13px;background:linear-gradient(#e6e8ee,#f6f7f9);border-top:1px solid #c4c4c4"></div>
<div class="a" style="left:28px;top:524.5px;width:263px;height:13px;background:linear-gradient(#e0e0e0,#cfcfcf);border-top:1px solid #a0a0a0"></div>
<div class="a" style="left:29px;top:525.5px;width:31px;height:12px;background:#fff;border:1px solid #a8a8a8"></div>
<span class="a" style="left:32.7px;top:527.9px;font-size:8.5px;line-height:8.5px;color:#111;white-space:nowrap;transform-origin:0 0;transform:scaleX(0.828);">100%</span>
<div class="a" style="left:60px;top:525.5px;width:12px;height:12px;background:linear-gradient(#fff,#e4e6ea);border:1px solid #b4bac4;border-radius:2px"><svg class="a" style="left:1.5px;top:1.5px" width="7" height="7" viewBox="0 0 7 7"><path d="M0.800 2 L3.500 5.200 L6.200 2" fill="none" stroke="#111" stroke-width="1.700"/></svg></div>
<svg class="a" style="left:76px;top:528px" width="20" height="8" viewBox="0 0 20 8"><path d="M1 0.500 V7.500" stroke="#8c8c8c" stroke-width="1.200"/><path d="M5.500 0.500 L2 4 L5.500 7.500 Z M17 0.500 L13.500 4 L17 7.500 Z" fill="#8c8c8c"/></svg>
<div class="a" style="left:98px;top:525.5px;width:20px;height:12px;background:#fff;border:1px solid #a8a8a8"></div>
<span class="a" style="left:101.7px;top:527.9px;font-size:8.5px;line-height:8.5px;color:#111;white-space:nowrap;transform-origin:0 0;transform:scaleX(1.000);">1</span>
<div class="a" style="left:117.5px;top:525.5px;width:12px;height:12px;background:linear-gradient(#fff,#e4e6ea);border:1px solid #b4bac4;border-radius:2px"><svg class="a" style="left:1.5px;top:1.5px" width="7" height="7" viewBox="0 0 7 7"><path d="M0.800 2 L3.500 5.200 L6.200 2" fill="none" stroke="#111" stroke-width="1.700"/></svg></div>
<svg class="a" style="left:134px;top:528px" width="20" height="8" viewBox="0 0 20 8"><path d="M1.500 0.500 L5 4 L1.500 7.500 Z M12.500 0.500 L16 4 L12.500 7.500 Z" fill="#8c8c8c"/><path d="M17.500 0.500 V7.500" stroke="#8c8c8c" stroke-width="1.200"/></svg>
<svg class="a" style="left:157px;top:526px" width="11" height="12" viewBox="0 0 11 12"><circle cx="5.500" cy="6.500" r="4.300" fill="#ddd" stroke="#777" stroke-width="1.200"/><path d="M5.500 4 V7 H8" stroke="#555" stroke-width="1" fill="none"/><path d="M1 1 L4 1 L4 3" stroke="#777" fill="none"/></svg>
<span class="a" style="left:202.3px;top:527.9px;font-size:8.5px;line-height:8.5px;color:#111;white-space:nowrap;transform-origin:0 0;transform:scaleX(0.883);">Never Saved</span>
<svg class="a" style="left:281.500px;top:527.500px" width="6" height="9" viewBox="0 0 6 9"><path d="M0.500 0.500 L5.500 4.500 L0.500 8.500 Z" fill="#111"/></svg>
<div class="a" style="left:290.5px;top:525.5px;width:12px;height:12px;background:linear-gradient(#fff,#e4e6ea);border:1px solid #b4bac4;border-radius:2px"><svg class="a" style="left:1.5px;top:1.5px" width="7" height="7" viewBox="0 0 7 7"><path d="M5 0.800 L2 3.500 L5 6.200" fill="none" stroke="#111" stroke-width="1.700"/></svg></div>
<div class="a" style="left:907px;top:525.5px;width:12px;height:12px;background:linear-gradient(#fff,#e4e6ea);border:1px solid #b4bac4;border-radius:2px"><svg class="a" style="left:1.5px;top:1.5px" width="7" height="7" viewBox="0 0 7 7"><path d="M2 0.800 L5 3.500 L2 6.200" fill="none" stroke="#111" stroke-width="1.700"/></svg></div>
<div class="a" style="left:599.5px;top:526px;width:12px;height:11px;background:linear-gradient(#fafafa,#d8dbe0);border:1px solid #9aa0aa;border-radius:2px"><div class="a" style="left:2px;top:2px;width:6px;height:6px;border:1px solid #999;background:#c8c8c8"></div></div>
<div class="a" style="left:919px;top:525px;width:13px;height:12px;background:#ececec;"></div>
<div class="a" style="left:932px;top:55.5px;width:28px;height:390px;background:#d3d3d3;border-left:1px solid #8c8c8c"></div>
<div class="a" style="left:932px;top:445.5px;width:28px;height:93.5px;background:#585858;border-left:1px solid #4a4a4a;border-right:1.500px solid #c0c0c0"></div>
<div class="a" style="left:933px;top:112px;width:27px;height:1px;background:#8e8e8e;box-shadow:0 1px 0 #e4e4e4"></div>
<div class="a" style="left:933px;top:166.5px;width:27px;height:1px;background:#8e8e8e;box-shadow:0 1px 0 #e4e4e4"></div>
<div class="a" style="left:933px;top:244.5px;width:27px;height:1px;background:#8e8e8e;box-shadow:0 1px 0 #e4e4e4"></div>
<div class="a" style="left:933px;top:303.5px;width:27px;height:1px;background:#8e8e8e;box-shadow:0 1px 0 #e4e4e4"></div>
<div class="a" style="left:933px;top:334.5px;width:27px;height:1px;background:#8e8e8e;box-shadow:0 1px 0 #e4e4e4"></div>
<div class="a" style="left:933px;top:368.5px;width:27px;height:1px;background:#8e8e8e;box-shadow:0 1px 0 #e4e4e4"></div>
<div class="a" style="left:939px;top:58px;width:13px;height:3px;background:transparent;border-top:1px dotted #b0b0b0;border-bottom:1px dotted #b0b0b0"></div>
<div class="a" style="left:939px;top:115px;width:13px;height:3px;background:transparent;border-top:1px dotted #b0b0b0;border-bottom:1px dotted #b0b0b0"></div>
<div class="a" style="left:939px;top:169px;width:13px;height:3px;background:transparent;border-top:1px dotted #b0b0b0;border-bottom:1px dotted #b0b0b0"></div>
<div class="a" style="left:939px;top:247px;width:13px;height:3px;background:transparent;border-top:1px dotted #b0b0b0;border-bottom:1px dotted #b0b0b0"></div>
<div class="a" style="left:939px;top:306px;width:13px;height:3px;background:transparent;border-top:1px dotted #b0b0b0;border-bottom:1px dotted #b0b0b0"></div>
<div class="a" style="left:939px;top:337px;width:13px;height:3px;background:transparent;border-top:1px dotted #b0b0b0;border-bottom:1px dotted #b0b0b0"></div>
<div class="a" style="left:939px;top:371px;width:13px;height:3px;background:transparent;border-top:1px dotted #b0b0b0;border-bottom:1px dotted #b0b0b0"></div>
<svg class="a" style="left:937.5px;top:67.5px" width="16" height="16" viewBox="0 0 16 16"><path d="M2 9.500 Q2 4 8.500 3 Q14.500 2.500 14.500 6.500 Q14.500 8.500 12 8.800 Q10.500 9 11 10.500 Q11.500 13 7.500 13.500 Q2 13.500 2 9.500 Z" fill="#333" stroke="#111" stroke-width="0.800"/><circle cx="5" cy="9" r="1.100" fill="#ddd"/><circle cx="7" cy="6" r="1.100" fill="#ddd"/><circle cx="10.500" cy="5.300" r="1.100" fill="#ddd"/><circle cx="7.500" cy="11" r="1.100" fill="#ddd"/></svg>
<svg class="a" style="left:937.5px;top:90.0px" width="16" height="16" viewBox="0 0 16 16"><defs><linearGradient id="cg" x1="0" y1="1" x2="1" y2="0"><stop offset="0" stop-color="#111"/><stop offset="1" stop-color="#eee"/></linearGradient></defs><path d="M2.500 13.500 L2.500 2.500 Q13.500 3 13.500 13.500 Z" fill="url(#cg)" stroke="#222" stroke-width="1"/></svg>
<svg class="a" style="left:937.5px;top:123.0px" width="16" height="16" viewBox="0 0 16 16"><rect x="1.500" y="2.500" width="13" height="10.500" fill="#222"/><rect x="2.5" y="3.5" width="2.200" height="2.200" fill="#ddd"/><rect x="2.5" y="6.5" width="2.200" height="2.200" fill="#777"/><rect x="2.5" y="9.5" width="2.200" height="2.200" fill="#777"/><rect x="5.5" y="3.5" width="2.200" height="2.200" fill="#777"/><rect x="5.5" y="6.5" width="2.200" height="2.200" fill="#777"/><rect x="5.5" y="9.5" width="2.200" height="2.200" fill="#ddd"/><rect x="8.5" y="3.5" width="2.200" height="2.200" fill="#777"/><rect x="8.5" y="6.5" width="2.200" height="2.200" fill="#ddd"/><rect x="8.5" y="9.5" width="2.200" height="2.200" fill="#777"/><rect x="11.5" y="3.5" width="2.200" height="2.200" fill="#ddd"/><rect x="11.5" y="6.5" width="2.200" height="2.200" fill="#777"/><rect x="11.5" y="9.5" width="2.200" height="2.200" fill="#777"/></svg>
<svg class="a" style="left:937.5px;top:145.5px" width="16" height="16" viewBox="0 0 16 16"><rect x="5.500" y="8.500" width="6" height="6" fill="#333"/><path d="M6 8.500 L4 3 M8.500 8.500 L8.500 1.500 M11 8.500 L13 4" stroke="#222" stroke-width="1.500"/><circle cx="4" cy="3" r="1.300" fill="#222"/><circle cx="13" cy="4" r="1.300" fill="#222"/></svg>
<svg class="a" style="left:937.5px;top:179.0px" width="16" height="16" viewBox="0 0 16 16"><path d="M2 4 H14" stroke="#222" stroke-width="1"/><path d="M2 7.500 H14" stroke="#222" stroke-width="2"/><path d="M2 12 H14" stroke="#222" stroke-width="3"/></svg>
<svg class="a" style="left:937.5px;top:201.0px" width="16" height="16" viewBox="0 0 16 16"><defs><linearGradient id="g2"><stop offset="0" stop-color="#fff"/><stop offset="1" stop-color="#111"/></linearGradient></defs><rect x="2" y="3.500" width="12" height="9" fill="url(#g2)" stroke="#222" stroke-width="1"/></svg>
<svg class="a" style="left:937.5px;top:223.5px" width="16" height="16" viewBox="0 0 16 16"><circle cx="6.500" cy="6.500" r="4.200" fill="#888" stroke="#222" stroke-width="1"/><circle cx="9.500" cy="9.500" r="4.200" fill="#ddd" fill-opacity="0.700" stroke="#222" stroke-width="1"/></svg>
<svg class="a" style="left:937.5px;top:257.0px" width="16" height="16" viewBox="0 0 16 16"><circle cx="8" cy="8" r="5.500" fill="#ddd" stroke="#222" stroke-width="1.200"/><circle cx="8" cy="8" r="2.800" fill="#222"/></svg>
<svg class="a" style="left:937.5px;top:281.5px" width="16" height="16" viewBox="0 0 16 16"><rect x="5.500" y="2.500" width="8" height="8" fill="#eee" stroke="#222" stroke-width="1"/><rect x="2.500" y="6" width="6.500" height="6.500" fill="#fff" stroke="#222" stroke-width="1"/><path d="M9.500 13 L13.500 13 L13.500 10" stroke="#444" fill="none"/></svg>
<svg class="a" style="left:937.5px;top:313.0px" width="16" height="17" viewBox="0 0 16 17"><path d="M8 9 L2 12 L8 15 L14 12 Z" fill="#eee" stroke="#222" stroke-width="0.800"/><path d="M8 5.500 L2 8.500 L8 11.500 L14 8.500 Z" fill="#bbb" stroke="#222" stroke-width="0.800"/><path d="M8 2 L2 5 L8 8 L14 5 Z" fill="#333" stroke="#111" stroke-width="0.800"/></svg>
<svg class="a" style="left:937.5px;top:345.5px" width="16" height="16" viewBox="0 0 16 16"><circle cx="8" cy="5" r="2.900" fill="#222"/><circle cx="4.800" cy="9" r="2.900" fill="#222"/><circle cx="11.200" cy="9" r="2.900" fill="#222"/><path d="M8 8 L6 14.500 L10 14.500 Z" fill="#222"/></svg>
<svg class="a" style="left:937.5px;top:379.0px" width="16" height="16" viewBox="0 0 16 16"><rect x="3.500" y="3.500" width="9" height="9" fill="#eee" stroke="#222" stroke-width="1.200"/><g fill="#111"><rect x="2" y="2" width="3" height="3"/><rect x="11" y="2" width="3" height="3"/><rect x="2" y="11" width="3" height="3"/><rect x="11" y="11" width="3" height="3"/><rect x="6.500" y="2" width="3" height="2"/><rect x="6.500" y="12" width="3" height="2"/><rect x="2" y="6.500" width="2" height="3"/><rect x="12" y="6.500" width="2" height="3"/></g></svg>
<svg class="a" style="left:937.5px;top:403.0px" width="16" height="16" viewBox="0 0 16 16"><path d="M3 2 V14" stroke="#222" stroke-width="1.200"/><rect x="4.500" y="3.500" width="6" height="3.500" fill="#333"/><rect x="4.500" y="9" width="9.500" height="3.500" fill="#333"/></svg>
<svg class="a" style="left:937.5px;top:424.5px" width="16" height="16" viewBox="0 0 16 16"><rect x="3" y="3" width="7" height="7" fill="#ddd" stroke="#222" stroke-width="1"/><rect x="6.500" y="6.500" width="7" height="7" fill="#222"/></svg>
<div class="a" style="left:0px;top:537px;width:960px;height:1px;background:#777;"></div>
<div class="a" style="left:0px;top:538px;width:960px;height:1px;background:#cfcfcf;"></div>
<div class="a" style="left:97px;top:127px;width:323px;height:329px;background:#e4e9ea;box-shadow:0 1px 7px rgba(0,0,0,0.28), 0 0 0 1px rgba(130,140,145,0.25)"></div>
<div class="a" style="left:98px;top:128px;width:321px;height:16px;background:linear-gradient(#f6f8f8,#e6eaeb);"></div>
<div class="a" style="left:99.5px;top:144px;width:318px;height:309.5px;background:#d8dddf;box-shadow:0 0 0 1px #eff2f2"></div>
<span class="a" style="left:100.0px;top:129.7px;font-size:11px;line-height:11px;color:#a2a2a2;white-space:nowrap;transform-origin:0 0;transform:scaleX(0.928);font-weight:bold;font-family:'Liberation Serif',serif;">3D Extrude &amp; Bevel Options</span>
<div class="a" style="left:107px;top:159px;width:216px;height:167px;background:transparent;border:1px solid #a3abac;box-shadow:1px 1px 0 #f2f5f5, inset 1px 1px 0 #f2f5f5"></div>
<div class="a" style="left:117px;top:154px;width:33px;height:10px;background:#d8dddf;"></div>
<span class="a" style="left:120.0px;top:155.2px;font-size:8.5px;line-height:8.5px;color:#0b7a55;white-space:nowrap;transform-origin:0 0;transform:scaleX(0.874);">Position:</span>
<div class="a" style="left:152px;top:152px;width:76px;height:14px;background:#fff;border:1px solid #9fd3bd;box-shadow:0 0 0 1px #e6f2ee"></div><div class="a" style="left:215px;top:153px;width:12px;height:12px;background:linear-gradient(#f4f6f6,#cfd6d6);border:1px solid #8e9898"><svg class="a" style="left:1.5px;top:2.0px" width="7" height="6" viewBox="0 0 7 6"><path d="M0.700 0.800 L3.500 4.300 L6.300 0.800" fill="none" stroke="#111" stroke-width="1.700"/></svg></div>
<span class="a" style="left:154.7px;top:154.9px;font-size:8.5px;line-height:8.5px;color:#111;white-space:nowrap;transform-origin:0 0;transform:scaleX(0.874);">Custom Rotation</span>
<svg class="a" style="left:121px;top:175px" width="132" height="132" viewBox="121 175 132 132">
<defs>
<linearGradient id="rg" x1="0.150" y1="0.150" x2="0.850" y2="0.850"><stop offset="0" stop-color="#e6faf0"/><stop offset="0.220" stop-color="#8ad9b4"/><stop offset="0.500" stop-color="#5cbf93"/><stop offset="0.780" stop-color="#8ad9b4"/><stop offset="1" stop-color="#d6f4e6"/></linearGradient>
<clipPath id="cc"><circle cx="186.800" cy="241" r="53"/></clipPath>
</defs>
<circle cx="186.800" cy="241" r="64" fill="#e9eeee" stroke="#b4bcbc" stroke-width="0.800"/>
<circle cx="186.800" cy="241" r="61.500" fill="url(#rg)" stroke="#86a89a" stroke-width="0.800"/>
<circle cx="186.800" cy="241" r="53.500" fill="#000" stroke="#3f8a6c" stroke-width="1.200"/>
<g clip-path="url(#cc)" fill="none" stroke="#0e5c2c" stroke-width="1">
<path d="M128 200 Q186 186 246 200 M128 216 Q186 206 246 216 M128 232 Q186 228 246 232 M128 249 Q186 251 246 249 M128 266 Q186 272 246 266 M128 282 Q186 293 246 282"/>
<path d="M150 185 Q142 241 150 297 M165 185 Q160 241 165 297 M179.500 185 Q178 241 179.500 297 M194 185 Q195.500 241 194 297 M208.500 185 Q213 241 208.500 297 M223 185 Q231 241 223 297"/>
</g>
<path d="M141.800 212.900 L187.700 203.200 L224.100 211.600 L174.200 219.400 Z" fill="#c6c6c6"/>
<path d="M174.200 219.400 L224.100 211.600 L229.300 267.400 L177.300 277.800 Z" fill="#9c9c9c"/>
<path d="M141.800 212.900 L174.200 219.400 L177.300 277.800 L146.200 271.300 Z" fill="#12a76b"/>
<path d="M141.800 212.900 L174.200 219.400 L177.300 277.800" fill="none" stroke="#d4cfc0" stroke-width="0.500"/>
</svg>
<svg class="a" style="left:258px;top:209px" width="15" height="14" viewBox="0 0 15 14"><path d="M1 7.500 H14" stroke="#555" stroke-width="1"/><path d="M3.500 6 A4 4 0 0 1 11.500 6" fill="none" stroke="#d03a5a" stroke-width="1.300"/><path d="M3.500 9 A4 3 0 0 0 11.500 9" fill="none" stroke="#888" stroke-width="0.900"/><path d="M10 4 L12.500 6.500 L13 3.500 Z" fill="#d03a5a"/></svg>
<svg class="a" style="left:259px;top:229px" width="14" height="16" viewBox="0 0 14 16"><path d="M7 1 V15" stroke="#555" stroke-width="1"/><path d="M5.500 3.500 A3.500 4.500 0 0 0 5.500 12.500" fill="none" stroke="#6a8a3a" stroke-width="1.300"/><path d="M8.500 3.500 A3.500 4.500 0 0 1 8.500 12.500" fill="none" stroke="#888" stroke-width="0.900"/><path d="M4 11 L6.500 13.500 L3.500 14 Z" fill="#6a8a3a"/></svg>
<svg class="a" style="left:259px;top:252px" width="14" height="14" viewBox="0 0 14 14"><circle cx="7" cy="7" r="5" fill="none" stroke="#2a9a8a" stroke-width="1.300" stroke-dasharray="2.500 1.500"/><circle cx="7" cy="7" r="1.500" fill="#2a6a9a"/><path d="M9 1 L12.500 3 L9.500 5 Z" fill="#2a9a8a"/></svg>
<div class="a" style="left:280.5px;top:209.8px;width:30px;height:12.8px;background:#fff;border:1px solid #a4acac;border-top-color:#8c9494"></div>
<span class="a" style="left:285.0px;top:211.5px;font-size:9px;line-height:9px;color:#000;white-space:nowrap;transform-origin:0 0;transform:scaleX(0.813);">-16°</span>
<div class="a" style="left:280.5px;top:231px;width:30px;height:12.8px;background:#fff;border:1px solid #a4acac;border-top-color:#8c9494"></div>
<span class="a" style="left:285.0px;top:232.7px;font-size:9px;line-height:9px;color:#000;white-space:nowrap;transform-origin:0 0;transform:scaleX(0.808);">58°</span>
<div class="a" style="left:280.5px;top:252px;width:30px;height:12.8px;background:#fff;border:1px solid #a4acac;border-top-color:#8c9494"></div>
<span class="a" style="left:285.0px;top:253.7px;font-size:9px;line-height:9px;color:#000;white-space:nowrap;transform-origin:0 0;transform:scaleX(0.813);">-10°</span>
<span class="a" style="left:226.3px;top:306.8px;font-size:8.5px;line-height:8.5px;color:#111;white-space:nowrap;transform-origin:0 0;transform:scaleX(0.870);">Perspective:</span>
<div class="a" style="left:270.5px;top:305px;width:28px;height:12.6px;background:#fff;border:1px solid #a4acac;border-top-color:#8c9494"></div>
<span class="a" style="left:274.0px;top:306.6px;font-size:9px;line-height:9px;color:#000;white-space:nowrap;transform-origin:0 0;transform:scaleX(0.848);">0°</span>
<div class="a" style="left:298px;top:305px;width:12.5px;height:12.6px;background:linear-gradient(#f4f6f6,#d0d6d6);border:1px solid #8e9898"><svg class="a" style="left:2.25px;top:1.2999999999999998px" width="6" height="8" viewBox="0 0 6 8"><path d="M1 0.800 L4.600 4 L1 7.200" fill="none" stroke="#111" stroke-width="1.700"/></svg></div>
<div class="a" style="left:332px;top:157px;width:73.5px;height:13.5px;background:linear-gradient(#ffffff,#eef3f2 45%,#c9d6d3 55%,#dfe9e6);border:1.500px solid #4a8470;border-radius:3.500px;box-shadow:0 0 0 1px #c4e6d8"></div>
<span class="a" style="left:362.0px;top:159.2px;font-size:10px;line-height:10px;color:#111;white-space:nowrap;transform-origin:0 0;transform:scaleX(0.851);">OK</span>
<div class="a" style="left:332px;top:179.5px;width:73.5px;height:13.5px;background:linear-gradient(#ffffff,#eef3f2 45%,#c9d6d3 55%,#dfe9e6);border:1.500px solid #4a8470;border-radius:3.500px;box-shadow:0 0 0 1px #c4e6d8"></div>
<span class="a" style="left:355.6px;top:181.7px;font-size:10px;line-height:10px;color:#111;white-space:nowrap;transform-origin:0 0;transform:scaleX(0.829);">Cancel</span>
<div class="a" style="left:332px;top:206px;width:73.5px;height:13.5px;background:linear-gradient(#ffffff,#eef3f2 45%,#c9d6d3 55%,#dfe9e6);border:1.500px solid #4a8470;border-radius:3.500px;box-shadow:0 0 0 1px #c4e6d8"></div>
<span class="a" style="left:348.5px;top:208.2px;font-size:10px;line-height:10px;color:#111;white-space:nowrap;transform-origin:0 0;transform:scaleX(0.911);">Map Art...</span>
<div class="a" style="left:332px;top:232.5px;width:73.5px;height:13.5px;background:linear-gradient(#ffffff,#eef3f2 45%,#c9d6d3 55%,#dfe9e6);border:1.500px solid #4a8470;border-radius:3.500px;box-shadow:0 0 0 1px #c4e6d8"></div>
<span class="a" style="left:341.4px;top:234.7px;font-size:10px;line-height:10px;color:#111;white-space:nowrap;transform-origin:0 0;transform:scaleX(0.885);">More Options</span>
<div class="a" style="left:345.5px;top:259px;width:10px;height:10px;background:#fff;border:1px solid #3f7f6a;box-shadow:0 0 0 1px #bfe3d5"><svg class="a" style="left:0.500px;top:0.500px" width="7" height="7" viewBox="0 0 7 7"><path d="M1 3.500 L2.800 5.800 L6 1" fill="none" stroke="#8a3a10" stroke-width="1.500"/></svg></div>
<span class="a" style="left:357.4px;top:258.8px;font-size:10px;line-height:10px;color:#111;white-space:nowrap;transform-origin:0 0;transform:scaleX(0.874);">Preview</span>
<div class="a" style="left:107px;top:336.5px;width:216px;height:95.5px;background:transparent;border:1px solid #a3abac;box-shadow:1px 1px 0 #f2f5f5, inset 1px 1px 0 #f2f5f5"></div>
<div class="a" style="left:118px;top:331px;width:61px;height:10px;background:#d8dddf;"></div>
<span class="a" style="left:121.2px;top:332.2px;font-size:8.5px;line-height:8.5px;color:#0a9a6e;white-space:nowrap;transform-origin:0 0;transform:scaleX(0.899);">Extrude &amp; Bevel</span>
<span class="a" style="left:120.0px;top:349.2px;font-size:8.5px;line-height:8.5px;color:#111;white-space:nowrap;transform-origin:0 0;transform:scaleX(0.917);">Extrude Depth:</span>
<div class="a" style="left:176.5px;top:346.7px;width:34px;height:13.2px;background:#fff;border:1px solid #a4acac;border-top-color:#8c9494"></div>
<span class="a" style="left:181.0px;top:349.0px;font-size:8.5px;line-height:8.5px;color:#000;white-space:nowrap;transform-origin:0 0;transform:scaleX(0.825);">135 pt</span>
<div class="a" style="left:210px;top:346.7px;width:13px;height:13.2px;background:linear-gradient(#f4f6f6,#d0d6d6);border:1px solid #8e9898"><svg class="a" style="left:2.5px;top:1.5999999999999996px" width="6" height="8" viewBox="0 0 6 8"><path d="M1 0.800 L4.600 4 L1 7.200" fill="none" stroke="#111" stroke-width="1.700"/></svg></div>
<span class="a" style="left:230.6px;top:349.2px;font-size:8.5px;line-height:8.5px;color:#111;white-space:nowrap;transform-origin:0 0;transform:scaleX(0.847);">Cap:</span>
<svg class="a" style="left:254px;top:346.500px" width="14" height="13" viewBox="0 0 14 13"><defs><linearGradient id="cp" x1="0" y1="0" x2="1" y2="0.300"><stop offset="0" stop-color="#3c3c3c"/><stop offset="0.550" stop-color="#7c7c7c"/><stop offset="1" stop-color="#c8c8c8"/></linearGradient></defs><g transform="rotate(-25 7 6.500)"><rect x="2" y="2" width="10" height="9" rx="4" fill="url(#cp)"/><ellipse cx="9.500" cy="6.500" rx="2.600" ry="4.300" fill="#b4b4b4"/></g></svg>
<div class="a" style="left:279.5px;top:346px;width:18px;height:14.5px;background:linear-gradient(#f0f3f3,#d2d8d8);border:1px solid #8a9292;border-radius:2px;box-shadow:inset 0 0 0 1px #f6f8f8"><svg class="a" style="left:1.500px;top:0px" width="14" height="13" viewBox="0 0 14 13"><g transform="rotate(-25 7 6.500)"><rect x="2" y="2" width="10" height="9" rx="4" fill="#4a4a4a"/><ellipse cx="9" cy="6.500" rx="2.800" ry="4.200" fill="#2e2e2e"/><ellipse cx="9.300" cy="6.500" rx="1.700" ry="3" fill="#cfcfcf"/></g></svg></div>
<div class="a" style="left:120px;top:369.5px;width:190px;height:1px;background:#a3abac;box-shadow:0 1px 0 #f2f5f5"></div>
<div class="a" style="left:130px;top:360px;width:92px;height:16px;background:linear-gradient(#eaeeee,#dde3e3);border:1px solid #f4f6f6;box-shadow:1.500px 1.500px 0 #70787a, 0 0 0 0.500px #aab2b2"></div>
<div class="a" style="left:134.5px;top:365.5px;width:81px;height:1.5px;background:#555;box-shadow:0 1px 0 #fff"></div>
<svg class="a" style="left:138.500px;top:367.500px" width="8" height="6" viewBox="0 0 8 6"><path d="M4 0.700 L7.300 5.300 L0.700 5.300 Z" fill="#eee" stroke="#333" stroke-width="0.900"/></svg>
<span class="a" style="left:151.0px;top:386.6px;font-size:8.5px;line-height:8.5px;color:#111;white-space:nowrap;transform-origin:0 0;transform:scaleX(0.864);">Bevel:</span>
<div class="a" style="left:176px;top:378.5px;width:116px;height:25px;background:#fff;border:1px solid #8c9494;border-top:1.500px solid #5c6262;box-shadow:1px 1px 0 #f2f5f5"></div>
<div class="a" style="left:177px;top:379.5px;width:22.5px;height:23px;background:#fff;border:2px solid #5c6060"><svg class="a" style="left:1px;top:3px" width="17" height="12" viewBox="0 0 17 12"><path d="M1 9 Q1.500 4 5 4 L12 4 Q15.500 4 16 9" fill="none" stroke="#b4b4b4" stroke-width="0.900"/></svg></div>
<span class="a" style="left:203.3px;top:386.6px;font-size:8.5px;line-height:8.5px;color:#111;white-space:nowrap;transform-origin:0 0;transform:scaleX(0.904);">Rounded</span>
<div class="a" style="left:279.5px;top:379.5px;width:11.5px;height:23px;background:linear-gradient(90deg,#f2f4f4,#dde2e2);border-left:1px solid #a8b0b0"><div class="a" style="left:3px;top:10px;width:0;height:0;border-top:3px solid #222;border-left:2.5px solid transparent;border-right:2.5px solid transparent"></div></div>
<span class="a" style="left:146.7px;top:411.2px;font-size:8.5px;line-height:8.5px;color:#111;white-space:nowrap;transform-origin:0 0;transform:scaleX(0.917);">Height:</span>
<div class="a" style="left:176px;top:409.3px;width:27.5px;height:12.8px;background:#fff;border:1px solid #a4acac;border-top-color:#8c9494"></div>
<span class="a" style="left:181.0px;top:411.2px;font-size:8.5px;line-height:8.5px;color:#000;white-space:nowrap;transform-origin:0 0;transform:scaleX(0.804);">16 pt</span>
<div class="a" style="left:203px;top:409.3px;width:12px;height:12.8px;background:linear-gradient(#f4f6f6,#d0d6d6);border:1px solid #8e9898"><svg class="a" style="left:2.0px;top:1.4000000000000004px" width="6" height="8" viewBox="0 0 6 8"><path d="M1 0.800 L4.600 4 L1 7.200" fill="none" stroke="#111" stroke-width="1.700"/></svg></div>
<svg class="a" style="left:246px;top:408px" width="15" height="15" viewBox="0 0 15 15"><g transform="rotate(-35 7.500 7.500)"><rect x="2.500" y="4" width="10" height="7" rx="3.500" fill="#5a5a5a"/><ellipse cx="9.300" cy="7.500" rx="2.600" ry="3.200" fill="#9a9a9a"/></g><path d="M11 3.500 L14 0.500 M14 0.500 L11.800 0.800 M14 0.500 L13.700 2.700 M3.500 11 L0.800 13.700 M0.800 13.700 L3 13.400 M0.800 13.700 L1.100 11.500" stroke="#111" stroke-width="1" fill="none"/></svg>
<div class="a" style="left:271.5px;top:408px;width:18.5px;height:15.5px;background:linear-gradient(#eef1f1,#cdd3d3);border:1px solid #8a9292;border-radius:2px"><svg class="a" style="left:1px;top:0px" width="15" height="14" viewBox="0 0 15 15"><g transform="rotate(-35 7.500 7.500)"><rect x="2.500" y="4" width="10" height="7" rx="3.500" fill="#5a5a5a"/><ellipse cx="9.300" cy="7.500" rx="2.600" ry="3.200" fill="#9a9a9a"/></g><path d="M11 3.500 L14 0.500 M14 0.500 L11.800 0.800 M14 0.500 L13.700 2.700 M3.500 11 L0.800 13.700 M0.800 13.700 L3 13.400 M0.800 13.700 L1.100 11.500" stroke="#111" stroke-width="1" fill="none"/></svg></div>
<span class="a" style="left:120.0px;top:440.6px;font-size:8.5px;line-height:8.5px;color:#111;white-space:nowrap;transform-origin:0 0;transform:scaleX(0.843);">Surface:</span>
<div class="a" style="left:151px;top:438px;width:71px;height:14px;background:#fff;border:1px solid #9fd3bd;box-shadow:0 0 0 1px #e6f2ee"></div><div class="a" style="left:209px;top:439px;width:12px;height:12px;background:linear-gradient(#f4f6f6,#cfd6d6);border:1px solid #8e9898"><svg class="a" style="left:1.5px;top:2.0px" width="7" height="6" viewBox="0 0 7 6"><path d="M0.700 0.800 L3.500 4.300 L6.300 0.800" fill="none" stroke="#111" stroke-width="1.700"/></svg></div>
<span class="a" style="left:154.4px;top:440.4px;font-size:8.5px;line-height:8.5px;color:#111;white-space:nowrap;transform-origin:0 0;transform:scaleX(0.847);">Plastic Shading</span>
</body></html>
